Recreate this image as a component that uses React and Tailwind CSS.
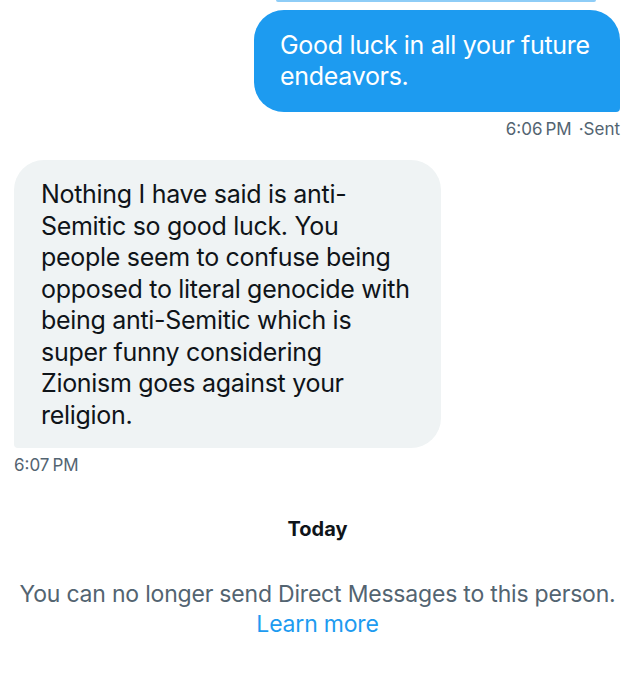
const lines = [
  'Nothing I have said is anti-',
  'Semitic so good luck. You',
  'people seem to confuse being',
  'opposed to literal genocide with',
  'being anti-Semitic which is',
  'super funny considering',
  'Zionism goes against your',
  'religion.',
];

export default function App() {
  return (
    <div className="w-[635px] h-[680px] bg-white overflow-hidden relative" style={{ fontFamily: "Inter, 'Liberation Sans', sans-serif" }}>
      <div className="absolute top-0 left-[276px] w-[320px] h-[2px] bg-[#8ecdf7] rounded-b-full"></div>
      <div className="flex flex-col pt-[10px] px-[14px]">
        {/* sent */}
        <div className="flex flex-col items-end pr-[1px]">
          <div className="w-[366px] bg-[#1d9bf0] text-white rounded-[30px] rounded-br-[4px] pl-[26px] pr-[20px] pt-[20px] pb-[20px] text-[25px] leading-[31px] tracking-[-0.3px] whitespace-nowrap">
            Good luck in all your future
            <br />
            endeavors.
          </div>
          <div className="mt-[6px] text-[17px] leading-[22px] text-[#536471]">
            6:06<span className="ml-[3px]">PM</span><span className="ml-[7px]">·Sent</span>
          </div>
        </div>
        {/* received */}
        <div className="flex flex-col items-start mt-[20px]">
          <div className="w-[427px] bg-[#eff3f4] text-[#0f1419] rounded-[30px] rounded-bl-[4px] pl-[27px] pr-[20px] pt-[19px] pb-[17px] text-[25px] leading-[31.5px] tracking-[-0.3px] whitespace-nowrap">
            {lines.map((l, i) => (
              <div key={i}>{l}</div>
            ))}
          </div>
          <div className="mt-[6px] text-[17px] leading-[22px] text-[#536471]">
            6:07<span className="ml-[3px]">PM</span>
          </div>
        </div>
        {/* today */}
        <div className="mt-[40px] text-center text-[20px] leading-[26px] font-bold text-[#0f1419]">Today</div>
        <div className="mt-[37px] text-center text-[23px] leading-[30px] text-[#536471] tracking-[-0.2px]">
          You can no longer send Direct Messages to this person.
          <br />
          <span className="text-[#1d9bf0]">Learn more</span>
        </div>
      </div>
    </div>
  );
}
